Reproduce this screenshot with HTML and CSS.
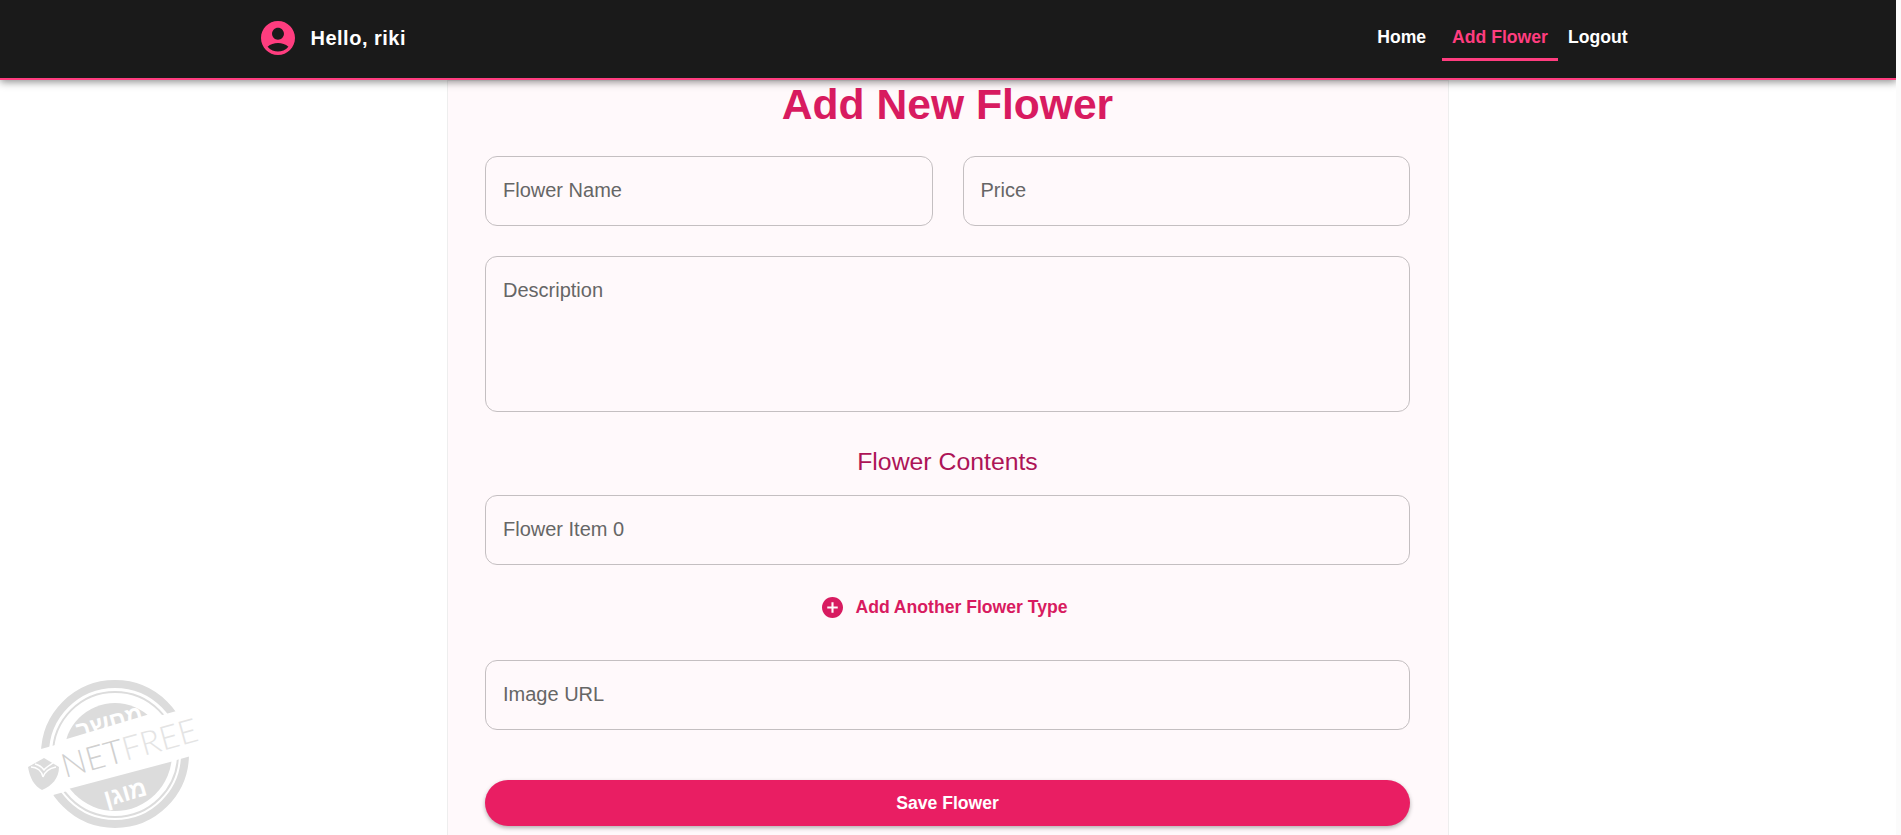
FILE: index.html
```html
<!DOCTYPE html>
<html lang="en">
<head>
    <meta charset="UTF-8">
    <meta name="viewport" content="width=device-width, initial-scale=1.0">
    <title>Add New Flower</title>
    <link rel="stylesheet" href="styles.css">
</head>
<body>
    <header class="topbar">
        <div class="topbar-inner">
            <div class="user">
                <svg class="user-icon" viewBox="2 2 20 20" width="34" height="34"><path fill="#ff3d7f" d="M12 2C6.48 2 2 6.48 2 12s4.48 10 10 10 10-4.48 10-10S17.52 2 12 2zm0 4c1.93 0 3.5 1.57 3.5 3.5S13.93 13 12 13s-3.5-1.57-3.5-3.5S10.07 6 12 6zm0 14c-2.03 0-4.43-.82-6.14-2.88C7.55 15.8 9.68 15 12 15s4.45.8 6.14 2.12C16.43 19.18 14.03 20 12 20z"/></svg>
                <span class="user-name">Hello, riki</span>
            </div>
            <nav class="nav">
                <a class="nav-link nav-home" href="#">Home</a>
                <a class="nav-link active" href="#">Add Flower</a>
                <a class="nav-link" href="#">Logout</a>
            </nav>
        </div>
    </header>
    <main class="card">
        <h1>Add New Flower</h1>
        <form class="flower-form">
            <div class="row">
                <input type="text" placeholder="Flower Name">
                <input type="text" placeholder="Price">
            </div>
            <textarea placeholder="Description"></textarea>
            <h2>Flower Contents</h2>
            <input type="text" placeholder="Flower Item 0">
            <button type="button" class="add-type">
                <svg viewBox="2 2 20 20" width="21" height="21"><path fill="#d81b60" d="M12 2C6.48 2 2 6.48 2 12s4.48 10 10 10 10-4.48 10-10S17.52 2 12 2zm5 11h-4v4h-2v-4H7v-2h4V7h2v4h4v2z"/></svg>
                Add Another Flower Type
            </button>
            <input type="text" placeholder="Image URL">
            <button type="button" class="save">Save Flower</button>
        </form>
    </main>
    <div class="stamp">
        <svg viewBox="0 0 180 160" width="180" height="160">
            <defs>
                <clipPath id="ringTop"><polygon points="0,0 180,0 180,28 0,78.4"/></clipPath>
                <clipPath id="ringBottom"><polygon points="0,128 180,77 180,160 0,160"/></clipPath>
                <clipPath id="blockTop"><polygon points="0,0 180,0 180,22.4 0,76.4"/></clipPath>
                <clipPath id="blockBottom"><polygon points="0,125.500 180,77.700 180,160 0,160"/></clipPath>
            </defs>
            <g clip-path="url(#ringTop)" class="stamp-ring">
                <circle cx="90" cy="79" r="70" stroke-width="8"/>
                <circle cx="90" cy="79" r="62" stroke-width="2"/>
            </g>
            <g clip-path="url(#ringBottom)" class="stamp-ring">
                <circle cx="90" cy="79" r="70" stroke-width="8"/>
                <circle cx="90" cy="79" r="63" stroke-width="2"/>
            </g>
            <circle class="stamp-block" cx="90" cy="79" r="51" clip-path="url(#blockTop)"/>
            <circle class="stamp-block" cx="90" cy="79" r="57" clip-path="url(#blockBottom)"/>
            <path class="stamp-block" d="M3 92L19 83L34 92C34 103 27 111 17 115C9 111 5 103 3 92z"/>
            <path class="stamp-fold" d="M6 92C12 92 17 96 18 102C20 96 26 93 31 92M10 89C14 90 17 92 19 95C21 92 25 90 28 88"/>
            <text class="stamp-he" x="84" y="55" transform="rotate(-16 84 47)">מחשב</text>
            <text class="stamp-he" x="100" y="126" transform="rotate(-16 100 117)">מוגן</text>
            <text class="stamp-net" x="40" y="103" textLength="140" transform="rotate(-15.6 40 103)">NET<tspan class="stamp-free">FREE</tspan></text>
        </svg>
    </div>
</body>
</html>
```
FILE: styles.css
```css
* {
    box-sizing: border-box;
}
html {
    height: 100%;
    background-color: #fbfbfb;
}
body {
    font-family: "Liberation Sans", Arial, sans-serif;
    margin: 0 5px 0 0;
    height: 100%;
    background-color: #fff;
    overflow: hidden;
}
.topbar {
    background: #1a1a1a;
    height: 80px;
    border-bottom: 2px solid #ff3d7f;
    box-shadow: 0 2px 8px rgba(0, 0, 0, 0.45);
    position: relative;
    z-index: 2;
    margin-right: -1px;
}
.topbar-inner {
    width: 1400px;
    height: 78px;
    margin: 0 auto;
    padding: 0 11px 0 12px;
    display: flex;
    align-items: center;
    justify-content: space-between;
}
.user {
    display: flex;
    align-items: center;
    gap: 16px;
    padding-bottom: 2px;
}
.user-icon {
    display: block;
}
.user-name {
    color: #fff;
    font-size: 20px;
    font-weight: 700;
    letter-spacing: 0.5px;
}
.nav {
    display: flex;
    align-items: stretch;
    height: 78px;
}
.nav-link {
    color: #fff;
    font-size: 17.6px;
    font-weight: 700;
    text-decoration: none;
    padding: 0 10px 3px;
    display: flex;
    align-items: center;
    position: relative;
}
.nav-home {
    margin-right: 6px;
}
.nav-link.active {
    color: #ff3d7f;
}
.nav-link.active::after {
    content: "";
    position: absolute;
    left: 0;
    right: 0;
    bottom: 17px;
    height: 3px;
    background: #ff3d7f;
}
.card {
    width: 1002px;
    margin: 0 auto;
    height: 755px;
    background: #fff9fb;
    border: 1px solid #eee;
    border-bottom: none;
    padding: 0 38px 0 37px;
}
h1 {
    color: #d81b60;
    font-size: 42.6px;
    font-weight: 700;
    text-align: center;
    line-height: 46px;
    margin: 0;
}
.flower-form {
    display: flex;
    flex-direction: column;
    margin-top: 29px;
}
.row {
    display: flex;
    gap: 30px;
    margin-bottom: 30px;
}
input, textarea {
    font-family: "Liberation Sans", Arial, sans-serif;
    font-size: 20px;
    width: 100%;
    height: 70px;
    padding: 0 17px 2px;
    border: 1px solid #c4bfc1;
    border-radius: 12px;
    background: transparent;
    display: block;
    outline: none;
}
textarea {
    height: 156px;
    padding-top: 22px;
    resize: none;
}
input::placeholder, textarea::placeholder {
    color: #666;
    opacity: 1;
}
h2 {
    color: #ad1457;
    font-size: 24.8px;
    font-weight: 400;
    text-align: center;
    line-height: 28px;
    margin: 36px 0 19px;
}
.add-type {
    align-self: center;
    display: flex;
    align-items: center;
    gap: 12px;
    background: none;
    border: none;
    color: #d81b60;
    font-family: inherit;
    font-size: 17.6px;
    font-weight: 700;
    margin: 28px 0 39px;
    padding: 0 5px 0 0;
    height: 28px;
}
.save {
    margin-top: 50px;
    height: 46px;
    border: none;
    border-radius: 23px;
    background: #e91e63;
    color: #fff;
    font-family: inherit;
    font-size: 17.6px;
    font-weight: 700;
    box-shadow: 0 2px 4px rgba(0, 0, 0, 0.3);
}
.stamp {
    position: absolute;
    left: 25px;
    bottom: 0;
    width: 180px;
    height: 160px;
}
.stamp-ring circle {
    fill: none;
    stroke: #dcdcdc;
}
.stamp-block {
    fill: #dcdcdc;
}
.stamp-fold {
    fill: none;
    stroke: #fff;
    stroke-width: 1.5;
}
.stamp-he {
    font-family: "Liberation Sans", sans-serif;
    font-size: 24px;
    font-weight: 700;
    fill: #fff;
    text-anchor: middle;
}
.stamp-net {
    font-family: Lato, sans-serif;
    font-size: 33px;
    font-weight: 300;
    fill: #d0d0d0;
}
.stamp-free {
    fill: #e4e4e4;
}
```
